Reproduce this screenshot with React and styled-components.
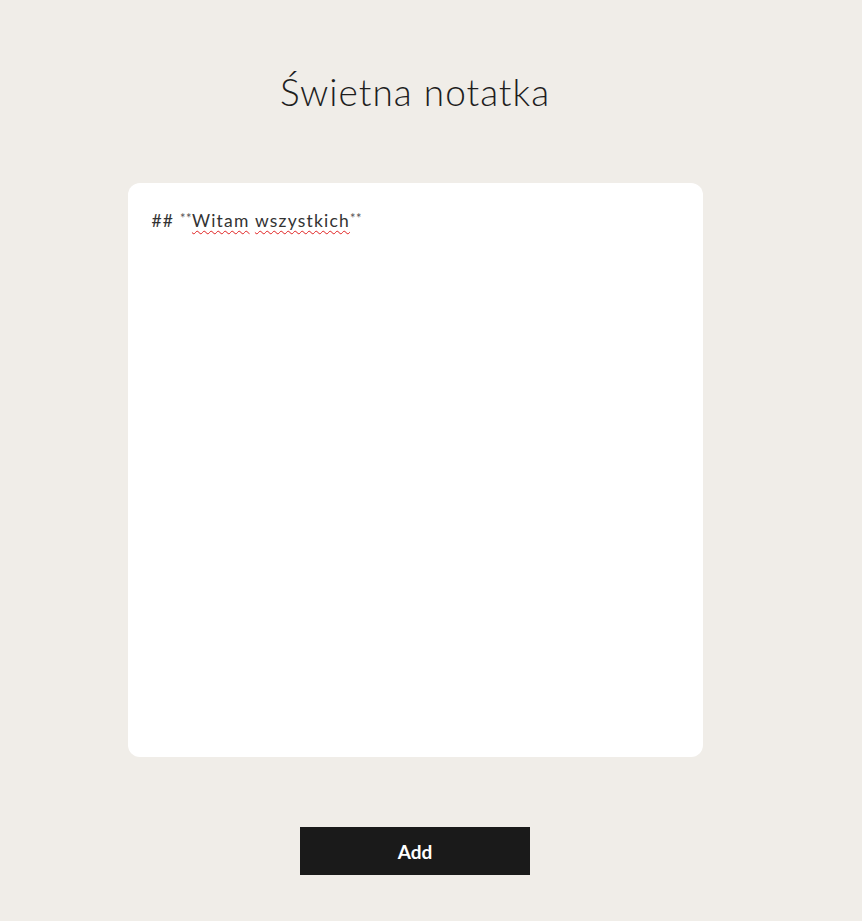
import React from "react";
import styled, { createGlobalStyle } from "styled-components";

const Global = createGlobalStyle`
  html, body { margin: 0; padding: 0; background: #f0ede8; }
  body { font-family: "Lato", "Open Sans", sans-serif; color: #1c1c1c; }
`;

const Page = styled.main`
  width: 830px;
  min-height: 921px;
  display: flex;
  flex-direction: column;
  align-items: center;
  box-sizing: border-box;
  padding-top: 70px;
`;

const Title = styled.h1`
  margin: 0;
  font-family: "Lato", sans-serif;
  font-weight: 300;
  font-size: 37px;
  line-height: 44px;
  letter-spacing: 1px;
  color: #1e1e1e;
`;

const Editor = styled.div`
  margin-top: 69px;
  width: 575px;
  height: 574px;
  box-sizing: border-box;
  background: #ffffff;
  border-radius: 12px;
  padding: 24px 24px;
  font-family: "Lato", sans-serif;
  font-weight: 400;
  font-size: 17.5px;
  line-height: 22px;
  letter-spacing: 1.2px;
  color: #333333;
  outline: none;
`;

const Misspelled = styled.span`
  text-decoration: underline wavy #e02020;
  text-decoration-thickness: 1px;
  text-underline-offset: 3px;
`;

const Stars = styled.span`
  font-size: 13px;
  vertical-align: 4px;
  letter-spacing: 0.5px;
  color: #555;
`;

const AddButton = styled.button`
  margin-top: 70px;
  width: 230px;
  height: 48px;
  border: none;
  background: #1a1a1a;
  color: #ffffff;
  font-family: "Lato", sans-serif;
  font-weight: 700;
  font-size: 19px;
  cursor: pointer;
`;

export default function App() {
  return (
    <>
      <Global />
      <Page>
        <Title>Świetna notatka</Title>
        <Editor contentEditable suppressContentEditableWarning spellCheck={false}>
          ## <Stars>**</Stars>
          <Misspelled>Witam</Misspelled> <Misspelled>wszystkich</Misspelled>
          <Stars>**</Stars>
        </Editor>
        <AddButton>Add</AddButton>
      </Page>
    </>
  );
}
